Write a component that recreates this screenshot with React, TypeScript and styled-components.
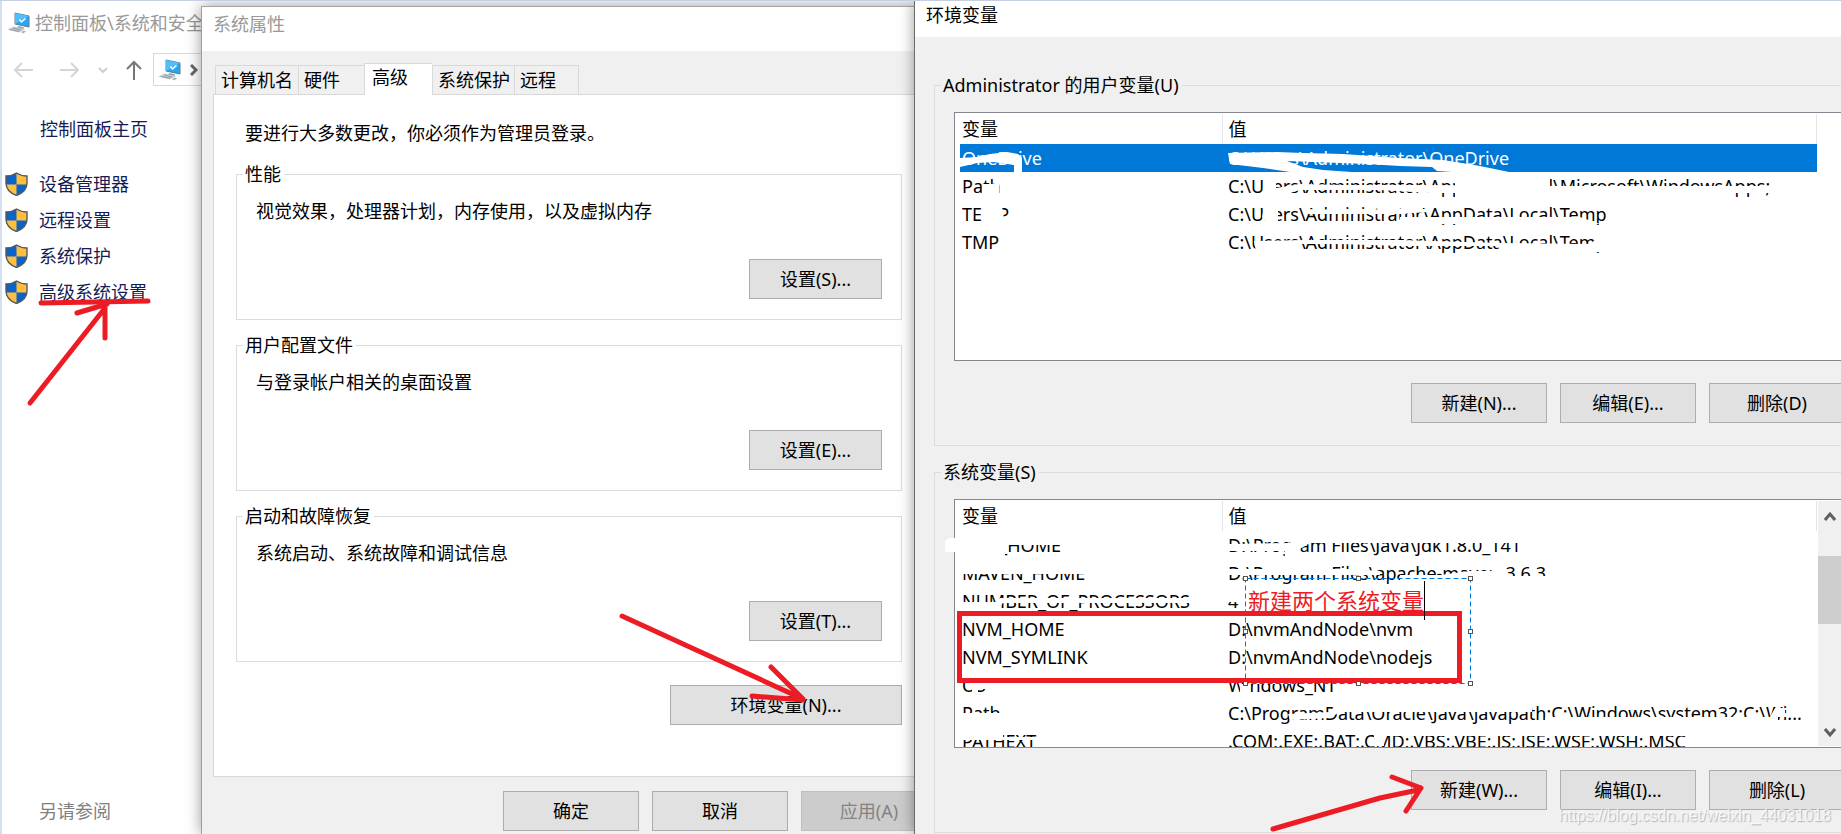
import React from 'react';
import styled, { createGlobalStyle } from 'styled-components';

const GlobalStyle = createGlobalStyle`
  *, *::before, *::after { box-sizing: border-box; }
  body {
    margin: 0;
    font-family: "Noto Sans", "Noto Sans CJK SC", sans-serif;
    font-size: 18px;
    line-height: 28px;
    color: #000;
    background: #fff;
  }
  button, table { font: inherit; color: inherit; }
  svg { flex: none; }
`;

const RED = '#ed1c24';

/* ---------- desktop ---------- */

const Desktop = styled.main`
  position: relative;
  display: grid;
  grid-template-columns: 201px 713px minmax(0, 1fr);
  grid-template-rows: minmax(0, 1fr);
  height: 100vh;
  overflow: hidden;
  border-top: 1px solid #c5cee2;
`;

/* ---------- control panel ---------- */

const ControlPanel = styled.section`
  display: flex;
  flex-direction: column;
  min-width: 0;
  overflow: hidden;
  padding: 8px 0 9px 5px;
  border-left: 2px solid #d3deef;
  background: #fff;
  white-space: nowrap;
`;

const PanelTitle = styled.header`
  display: flex;
  align-items: center;
  gap: 4px;
  color: #999;
`;

const NavBar = styled.nav`
  display: flex;
  align-items: center;
  gap: 18px;
  margin-top: 16px;
`;

const NavButton = styled.button`
  display: flex;
  padding: 0;
  border: 0;
  background: none;
`;

const AddressBox = styled.div`
  display: flex;
  flex: none;
  align-items: center;
  gap: 8px;
  height: 33px;
  width: 80px;
  margin-left: -7px;
  padding-left: 4px;
  border: 1px solid #d9d9d9;
`;

const HomeLink = styled.a`
  margin: 29px 0 27px 33px;
  color: #151c55;
  text-decoration: none;
`;

const TaskList = styled.ul`
  display: flex;
  flex-direction: column;
  gap: 8px;
  margin: 0;
  padding: 0;
  list-style: none;
`;

const TaskLink = styled.a`
  display: flex;
  align-items: center;
  gap: 11px;
  margin-left: -2px;
  color: #151c55;
  text-decoration: none;
`;

const SeeAlso = styled.h2`
  margin: auto 0 0 32px;
  font-size: 18px;
  font-weight: 400;
  color: #808080;
`;

/* ---------- dialogs ---------- */

const Dialog = styled.section<{ $offset?: boolean }>`
  display: flex;
  flex-direction: column;
  min-width: 0;
  min-height: 0;
  margin-top: ${(p) => (p.$offset ? '5px' : '0')};
  border-left: 1px solid ${(p) => (p.$offset ? '#9d9d9d' : '#6b6b6b')};
  border-top: ${(p) => (p.$offset ? '1px solid #a5a5a5' : '0')};
  background: #f0f0f0;
  box-shadow: 0 0 14px rgba(0, 0, 0, 0.4);
  white-space: nowrap;
`;

const TitleBar = styled.header<{ $active?: boolean }>`
  padding: ${(p) => (p.$active ? '0 12px 8px 11px' : '3px 12px 13px 11px')};
  color: ${(p) => (p.$active ? '#000' : '#999')};
  background: #fff;
`;

const PropertiesBody = styled.div`
  display: flex;
  flex: 1;
  flex-direction: column;
  padding: 12px 0 3px 11px;
  overflow: hidden;
`;

const TabStrip = styled.div`
  display: flex;
  align-items: flex-end;
  padding-left: 2px;
`;

const Tab = styled.button<{ $selected?: boolean; $width: number }>`
  position: relative;
  width: ${(p) => p.$width}px;
  height: ${(p) => (p.$selected ? 32 : 29)}px;
  margin-bottom: ${(p) => (p.$selected ? '-1px' : '0')};
  padding: ${(p) => (p.$selected ? '0 0 5px 7px' : '0 0 0 5px')};
  border: 1px solid #d9d9d9;
  border-bottom: 0;
  border-right-width: 0;
  background: ${(p) => (p.$selected ? '#fff' : '#f0f0f0')};
  text-align: left;
  line-height: 26px;
  &:last-child { border-right-width: 1px; }
`;

const TabPage = styled.div`
  display: flex;
  flex: none;
  flex-direction: column;
  width: 736px;
  padding: 24px 46px 51px 22px;
  border: 1px solid #d9d9d9;
  background: #fff;
`;

const Notice = styled.p`
  margin: 0 0 13px 9px;
`;

const Group = styled.fieldset`
  display: flex;
  flex-direction: column;
  min-width: 0;
  height: 160px;
  margin: 0 0 11px;
  padding: 9px 19px 0;
  border: 1px solid #dcdcdc;
`;

const GroupLegend = styled.legend`
  margin-left: -13px;
  padding: 0 3px 0 2px;
`;

const GroupText = styled.p`
  margin: 0;
`;

const PushButton = styled.button<{ $width?: number }>`
  flex: none;
  width: ${(p) => p.$width ?? 136}px;
  height: 40px;
  padding: 0;
  border: 1px solid #adadad;
  background: #e1e1e1;
  text-align: center;
  &:disabled {
    color: #838383;
    border-color: #bfbfbf;
    background: #ccc;
  }
`;

const GroupAction = styled(PushButton)`
  align-self: flex-end;
  margin-top: 34px;
`;

const VariablesAction = styled(PushButton)`
  align-self: flex-end;
  margin-top: 12px;
`;

const ButtonRow = styled.div<{ $top: number }>`
  display: flex;
  justify-content: flex-end;
  gap: 13px;
  margin-top: ${(p) => p.$top}px;
`;

const DialogButtons = styled(ButtonRow)`
  width: 724px;
`;

/* ---------- environment variables ---------- */

const VariablesBody = styled.div`
  display: flex;
  flex: 1;
  flex-direction: column;
  padding: 34px 0 0 19px;
  overflow: hidden;
`;

const VariableGroup = styled.fieldset`
  flex: none;
  min-width: 0;
  margin: 0 -5px 12px 0;
  padding: 13px 0 22px 19px;
  border: 1px solid #dcdcdc;
`;

const VariableLegend = styled.legend`
  margin-left: -13px;
  padding: 0 3px 0 2px;
`;

const ListFrame = styled.div`
  display: flex;
  height: 249px;
  overflow: hidden;
  border: 1px solid #828790;
  padding: 1px 3px 1px 5px;
  background: #fff;
`;

const VariableTable = styled.table`
  flex: 1;
  align-self: flex-start;
  min-width: 0;
  border-collapse: collapse;
  table-layout: fixed;
  th, td {
    height: 28px;
    padding: 0 0 0 2px;
    overflow: hidden;
    text-align: left;
    font-weight: 400;
    line-height: 28px;
  }
  th {
    height: 30px;
    border-right: 1px solid #e5e5e5;
  }
  th:first-child { width: 262px; }
  th + th, td + td { padding-left: 6px; }
`;

const VariableRow = styled.tr<{ $selected?: boolean }>`
  color: ${(p) => (p.$selected ? '#fff' : '#000')};
  background: ${(p) => (p.$selected ? '#0078d7' : 'transparent')};
`;

const Gutter = styled.div`
  width: 24px;
`;

const ScrollBar = styled.div`
  display: flex;
  flex-direction: column;
  align-items: center;
  width: 24px;
  margin-left: 1px;
  margin-right: -1px;
  padding: 10px 0 8px;
  background: #f0f0f0;
`;

const ScrollThumb = styled.div`
  align-self: stretch;
  height: 68px;
  margin: 33px 0 auto;
  background: #cdcdcd;
`;

/* ---------- annotations ---------- */

const Overlay = styled.svg`
  position: absolute;
  top: -1px;
  left: 0;
  width: 100%;
  height: 100%;
  overflow: visible;
  pointer-events: none;
`;

const Note = styled.div`
  position: absolute;
  top: 583px;
  left: 1248px;
  font-size: 22px;
  line-height: 32px;
  color: ${RED};
`;

const Watermark = styled.div`
  position: absolute;
  right: 10px;
  bottom: 8px;
  font-family: "Liberation Sans", Arial, sans-serif;
  font-size: 16px;
  line-height: 20px;
  color: rgba(255, 255, 255, 0.75);
  text-shadow: 1px 1px 1px rgba(0, 0, 0, 0.25);
`;

function ComputerIcon() {
  return (
    <svg width="24" height="22" viewBox="0 0 24 22" aria-hidden="true">
      <path d="M8 1 L22 4 V15 L8 12 Z" fill="#2aa5f2" stroke="#5d7a90" strokeWidth="1" />
      <path d="M8 1 L22 4 L8 12 Z" fill="#52bdf8" />
      <path d="M12.500 7.500 l2 2.500 l4 -3.500" fill="none" stroke="#fff" strokeWidth="1.500" />
      <path d="M11 14 l6 1.500 l-1 2 l-6 -1z" fill="#8f9aa3" />
      <path d="M0 17.500 L7 14.500 L18 17 L12 20.500 Z" fill="#c3cbd1" />
      <path d="M3 17.500 L12 19.500 M6 16 L14 18.200" stroke="#8f9aa3" strokeWidth="1" />
      <path d="M14 20 l3 -1.500 l2 1 l-3 2z" fill="#aab3ba" />
    </svg>
  );
}

function ShieldIcon() {
  return (
    <svg width="23" height="24" viewBox="0 0 23 24" aria-hidden="true">
      <clipPath id="shield-clip">
        <path d="M11.500 1 C8.500 3 5 4 1 4 V11 C1 17 5 21 11.500 23.500 C18 21 22 17 22 11 V4 C18 4 14.500 3 11.500 1Z" />
      </clipPath>
      <g clipPath="url(#shield-clip)">
        <rect width="23" height="24" fill="#0a63c9" />
        <rect x="11.500" width="12" height="12.500" fill="#ffbf3c" />
        <rect y="12.500" width="11.500" height="12" fill="#ffbf3c" />
      </g>
      <path d="M11.500 1 C8.500 3 5 4 1 4 V11 C1 17 5 21 11.500 23.500 C18 21 22 17 22 11 V4 C18 4 14.500 3 11.500 1Z" fill="none" stroke="#555a5e" strokeWidth="1.400" />
    </svg>
  );
}

function Glyph({ d, width, height = 20, color, stroke = 2 }: { d: string; width: number; height?: number; color: string; stroke?: number }) {
  return (
    <svg width={width} height={height} viewBox={`0 0 ${width} ${height}`} fill="none" stroke={color} strokeWidth={stroke} aria-hidden="true">
      <path d={d} />
    </svg>
  );
}

type Variable = { name: string; value: string; selected?: boolean };

const userVariables: Variable[] = [
  { name: 'OneDrive', value: 'C:\\Users\\Administrator\\OneDrive', selected: true },
  { name: 'Path', value: 'C:\\Users\\Administrator\\AppData\\Local\\Microsoft\\WindowsApps;' },
  { name: 'TEMP', value: 'C:\\Users\\Administrator\\AppData\\Local\\Temp' },
  { name: 'TMP', value: 'C:\\Users\\Administrator\\AppData\\Local\\Temp' },
];

const systemVariables: Variable[] = [
  { name: 'JAVA_HOME', value: 'D:\\Program Files\\Java\\jdk1.8.0_141' },
  { name: 'MAVEN_HOME', value: 'D:\\Program Files\\apache-maven-3.6.3' },
  { name: 'NUMBER_OF_PROCESSORS', value: '4' },
  { name: 'NVM_HOME', value: 'D:\\nvmAndNode\\nvm' },
  { name: 'NVM_SYMLINK', value: 'D:\\nvmAndNode\\nodejs' },
  { name: 'OS', value: 'Windows_NT' },
  { name: 'Path', value: 'C:\\ProgramData\\Oracle\\Java\\javapath;C:\\Windows\\system32;C:\\Wi...' },
  { name: 'PATHEXT', value: '.COM;.EXE;.BAT;.CMD;.VBS;.VBE;.JS;.JSE;.WSF;.WSH;.MSC' },
];

function VariableList({ rows }: { rows: Variable[] }) {
  return (
    <VariableTable>
      <thead>
        <tr>
          <th scope="col">变量</th>
          <th scope="col">值</th>
        </tr>
      </thead>
      <tbody>
        {rows.map((row) => (
          <VariableRow key={row.name} $selected={row.selected}>
            <td>{row.name}</td>
            <td>{row.value}</td>
          </VariableRow>
        ))}
      </tbody>
    </VariableTable>
  );
}

const tabs = [
  { label: '计算机名', width: 83 },
  { label: '硬件', width: 66 },
  { label: '高级', width: 68, selected: true },
  { label: '系统保护', width: 82 },
  { label: '远程', width: 65 },
];

const groups = [
  { title: '性能', text: '视觉效果，处理器计划，内存使用，以及虚拟内存', action: '设置(S)...' },
  { title: '用户配置文件', text: '与登录帐户相关的桌面设置', action: '设置(E)...' },
  { title: '启动和故障恢复', text: '系统启动、系统故障和调试信息', action: '设置(T)...' },
];

/* White brush strokes that hide parts of the lists. */
const scribbles = [
  // OneDrive row
  'M960 158 L977 157 L990 154 L1007 152 L1018 154 L1022 158 V172 H1014 V165 L993 162 L977 163 L960 167Z',
  'M1228 153 L1277 152 L1303 153 L1343 154 L1400 158 L1443 160 L1480 166 L1509 172 H1452 L1437 171 L1432 167 L1400 166 L1367 164 L1287 161 L1303 167 L1323 170 L1352 172 H1290 L1263 168 L1230 164Z',
  // Path row
  'M982 184 H994 L996 178 L999 184 V197 H982Z',
  'M1264 176 H1276 V188 L1300 184 L1345 185 L1420 185 L1560 186 H1800 V193 H1430 L1380 190 H1300 L1276 197 H1264Z',
  'M1455 174 H1550 V198 H1455Z',
  // TEMP row
  'M982 204 H1001 L1004 214 L1001 224 H982Z',
  'M1262 217 L1265 204 H1278 V224 H1268Z',
  'M1305 209 L1350 210 L1400 209 L1428 209 V212 L1400 214 H1305Z',
  'M1400 217 H1580 L1600 224 H1400Z',
  // TMP row
  'M1254 241 L1305 240 L1400 240 L1500 243 L1590 244 L1600 236 H1622 V244 L1604 252 H1500 L1498 246 H1400 L1340 244 H1300 V252 H1256Z',
  // JAVA_HOME row
  'M945 541 L949 538 H1005 L1010 534 H1080 V545 H1005 V557 H960 V552 H945Z',
  'M1228 544 L1290 543 L1296 533 H1550 V543 H1310 L1300 549 V556 H1285 V551 H1228Z',
  // MAVEN_HOME row
  'M960 564 H1100 V574 H960Z',
  'M1228 569 H1350 L1380 571 V575 H1228Z',
  'M1400 575 H1440 L1470 571 H1492 V564 H1504 L1508 576 H1570 V584 H1400Z',
  // NUMBER_OF_PROCESSORS row
  'M960 602 H996 L1000 598 H1205 V603 H1003 L996 611 H960Z',
  'M1228 594 H1241 V602 H1228Z',
  // OS row
  'M972 683 H990 V689 H978 V693 H972Z',
  'M1240 684 H1260 L1290 684 V679 H1250 V693 H1240Z',
  // Path row
  'M960 713 H1006 V724 H960Z',
  'M1288 714 L1330 712 L1335 705 H1532 V712 H1340 L1330 718 L1290 720Z',
  'M1545 717 H1770 L1775 708 H1785 V713 H1796 V717 H1778 V726 H1545Z',
  // PATHEXT row
  'M960 731 H1003 V740 H960Z M1003 737 H1045 V740 H1003Z',
  'M1374 732 H1384 V746 H1374Z M1384 731 H1720 V736 H1384Z',
];

const handles = [
  [1245, 578], [1358, 578], [1470, 578],
  [1245, 631], [1470, 631],
  [1245, 683], [1358, 683], [1470, 683],
];

export default function App() {
  return (
    <>
      <GlobalStyle />
      <Desktop>
        <ControlPanel>
          <PanelTitle>
            <ComputerIcon />
            控制面板\系统和安全
          </PanelTitle>
          <NavBar>
            <NavButton aria-label="后退">
              <Glyph width={27} color="#d5d5d5" d="M26 10 H8 M15 3 L8 10 L15 17" />
            </NavButton>
            <NavButton aria-label="前进">
              <Glyph width={27} color="#d5d5d5" d="M8 10 H26 M19 3 L26 10 L19 17" />
            </NavButton>
            <NavButton aria-label="最近位置">
              <Glyph width={11} color="#cfcfcf" d="M2 8 L6 12 L10 8" />
            </NavButton>
            <NavButton aria-label="上移">
              <Glyph width={16} color="#777" d="M8 20 V2 M1 9 L8 2 L15 9" />
            </NavButton>
            <AddressBox>
              <ComputerIcon />
              <Glyph width={8} height={12} color="#666" stroke={3} d="M1 1 L6 6 L1 11" />
            </AddressBox>
          </NavBar>
          <HomeLink href="#home">控制面板主页</HomeLink>
          <TaskList>
            {['设备管理器', '远程设置', '系统保护', '高级系统设置'].map((task) => (
              <li key={task}>
                <TaskLink href="#task">
                  <ShieldIcon />
                  {task}
                </TaskLink>
              </li>
            ))}
          </TaskList>
          <SeeAlso>另请参阅</SeeAlso>
        </ControlPanel>

        <Dialog $offset aria-label="系统属性">
          <TitleBar>系统属性</TitleBar>
          <PropertiesBody>
            <TabStrip role="tablist">
              {tabs.map((tab) => (
                <Tab key={tab.label} role="tab" aria-selected={!!tab.selected} $selected={tab.selected} $width={tab.width}>
                  {tab.label}
                </Tab>
              ))}
            </TabStrip>
            <TabPage role="tabpanel">
              <Notice>要进行大多数更改，你必须作为管理员登录。</Notice>
              {groups.map((group) => (
                <Group key={group.title}>
                  <GroupLegend>{group.title}</GroupLegend>
                  <GroupText>{group.text}</GroupText>
                  <GroupAction $width={133}>{group.action}</GroupAction>
                </Group>
              ))}
              <VariablesAction $width={232}>环境变量(N)...</VariablesAction>
            </TabPage>
            <DialogButtons $top={14}>
              <PushButton>确定</PushButton>
              <PushButton>取消</PushButton>
              <PushButton disabled>应用(A)</PushButton>
            </DialogButtons>
          </PropertiesBody>
        </Dialog>

        <Dialog aria-label="环境变量">
          <TitleBar $active>环境变量</TitleBar>
          <VariablesBody>
            <VariableGroup>
              <VariableLegend>Administrator 的用户变量(U)</VariableLegend>
              <ListFrame>
                <VariableList rows={userVariables} />
                <Gutter />
              </ListFrame>
              <ButtonRow $top={22}>
                <PushButton>新建(N)...</PushButton>
                <PushButton>编辑(E)...</PushButton>
                <PushButton>删除(D)</PushButton>
              </ButtonRow>
            </VariableGroup>
            <VariableGroup>
              <VariableLegend>系统变量(S)</VariableLegend>
              <ListFrame>
                <VariableList rows={systemVariables} />
                <ScrollBar>
                  <Glyph width={12} height={12} color="#606060" stroke={3} d="M1 9 L6 3 L11 9" />
                  <ScrollThumb />
                  <Glyph width={12} height={12} color="#606060" stroke={3} d="M1 3 L6 9 L11 3" />
                </ScrollBar>
              </ListFrame>
              <ButtonRow $top={22}>
                <PushButton>新建(W)...</PushButton>
                <PushButton>编辑(I)...</PushButton>
                <PushButton>删除(L)</PushButton>
              </ButtonRow>
            </VariableGroup>
          </VariablesBody>
        </Dialog>

        <Overlay aria-hidden="true">
          <g fill="#fff">
            {scribbles.map((d) => (
              <path key={d} d={d} />
            ))}
          </g>
        </Overlay>
        <Note>新建两个系统变量</Note>
        <Overlay aria-hidden="true">
          <g fill="none" stroke={RED} strokeWidth="5" strokeLinecap="round" strokeLinejoin="round">
            <path d="M41 303 L148 301" />
            <path d="M30 403 L105 308 M77 313 L107 304 M105 308 V338" />
            <path d="M622 616 L803 699 M771 667 L803 699 M752 696 L803 700" />
            <path d="M1273 829 L1380 798 L1418 790 M1392 777 L1421 788 M1406 811 L1421 788" />
          </g>
          <rect x="959.500" y="613.500" width="500" height="67" fill="none" stroke={RED} strokeWidth="5" />
          <rect x="1245.500" y="578.500" width="225" height="105" fill="none" stroke="#0078d7" strokeDasharray="5 3" />
          {handles.map(([x, y]) => (
            <rect key={`${x}-${y}`} x={x - 1.5} y={y - 1.5} width="4" height="4" fill="#fff" stroke="#555" />
          ))}
          <path d="M1424.500 581 V620" stroke="#000" />
        </Overlay>
        <Watermark>https://blog.csdn.net/weixin_44031018</Watermark>
      </Desktop>
    </>
  );
}
